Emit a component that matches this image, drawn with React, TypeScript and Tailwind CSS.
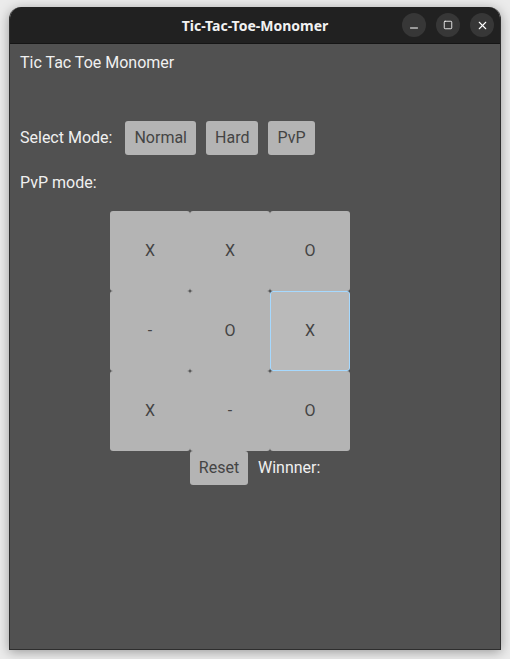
import { Minus, Square, X } from "lucide-react"

const board = ["X", "X", "O", "-", "O", "X", "X", "-", "O"]

export default function App() {
  return (
    <div className="w-[510px] h-[659px] bg-[#ebebeb] pt-[7px] pl-[9px] font-['Roboto',sans-serif]">
      <div className="w-[492px] h-[643px] flex flex-col rounded-t-[12px] overflow-hidden shadow-[0_2px_12px_rgba(0,0,0,0.35)] border border-[#2e2e2e] border-t-0">
        <div className="h-[37px] shrink-0 bg-[#212121] relative flex items-center justify-center border-b border-[#151515]">
          <span className="text-[#f2f2f2] text-[14px] font-bold font-['Noto_Sans',sans-serif]">
            Tic-Tac-Toe-Monomer
          </span>
          <div className="absolute right-[6px] top-[6px] flex gap-[10px]">
            <div className="w-6 h-6 rounded-full bg-[#373737] flex items-center justify-center text-white">
              <Minus size={12} strokeWidth={2} className="translate-y-[3px]" />
            </div>
            <div className="w-6 h-6 rounded-full bg-[#373737] flex items-center justify-center text-white">
              <Square size={10} strokeWidth={2} />
            </div>
            <div className="w-6 h-6 rounded-full bg-[#373737] flex items-center justify-center text-white">
              <X size={13} strokeWidth={2} />
            </div>
          </div>
        </div>
        <div className="flex-1 bg-[#515151] px-[10px] pt-[9px] text-[16px] text-[#f0f0f0]">
          <div className="leading-[19px]">Tic Tac Toe Monomer</div>
          <div className="flex items-center mt-[49px] h-[34px]">
            <span className="mr-[13px]">Select Mode:</span>
            <div className="flex gap-[10px]">
              {["Normal", "Hard", "PvP"].map((m) => (
                <button key={m} className="h-[34px] px-[9px] rounded-[3px] bg-[#b4b4b4] text-[#444444]">
                  {m}
                </button>
              ))}
            </div>
          </div>
          <div className="mt-[18px] leading-[19px]">PvP mode:</div>
          <div className="ml-[90px] mt-[19px] grid grid-cols-[80px_80px_80px] w-[240px]">
            {board.map((v, i) => (
              <button
                key={i}
                className={
                  i === 5
                    ? "h-[80px] rounded-[3px] bg-[#bababa] border border-[#a6d9ff] text-[#444444]"
                    : "h-[80px] rounded-[3px] bg-[#b4b4b4] text-[#444444]"
                }
              >
                {v}
              </button>
            ))}
          </div>
          <div className="ml-[170px] flex items-center">
            <button className="h-[34px] w-[58px] rounded-[3px] bg-[#b4b4b4] text-[#444444]">Reset</button>
            <span className="ml-[10px]">Winnner:</span>
          </div>
        </div>
      </div>
    </div>
  )
}
